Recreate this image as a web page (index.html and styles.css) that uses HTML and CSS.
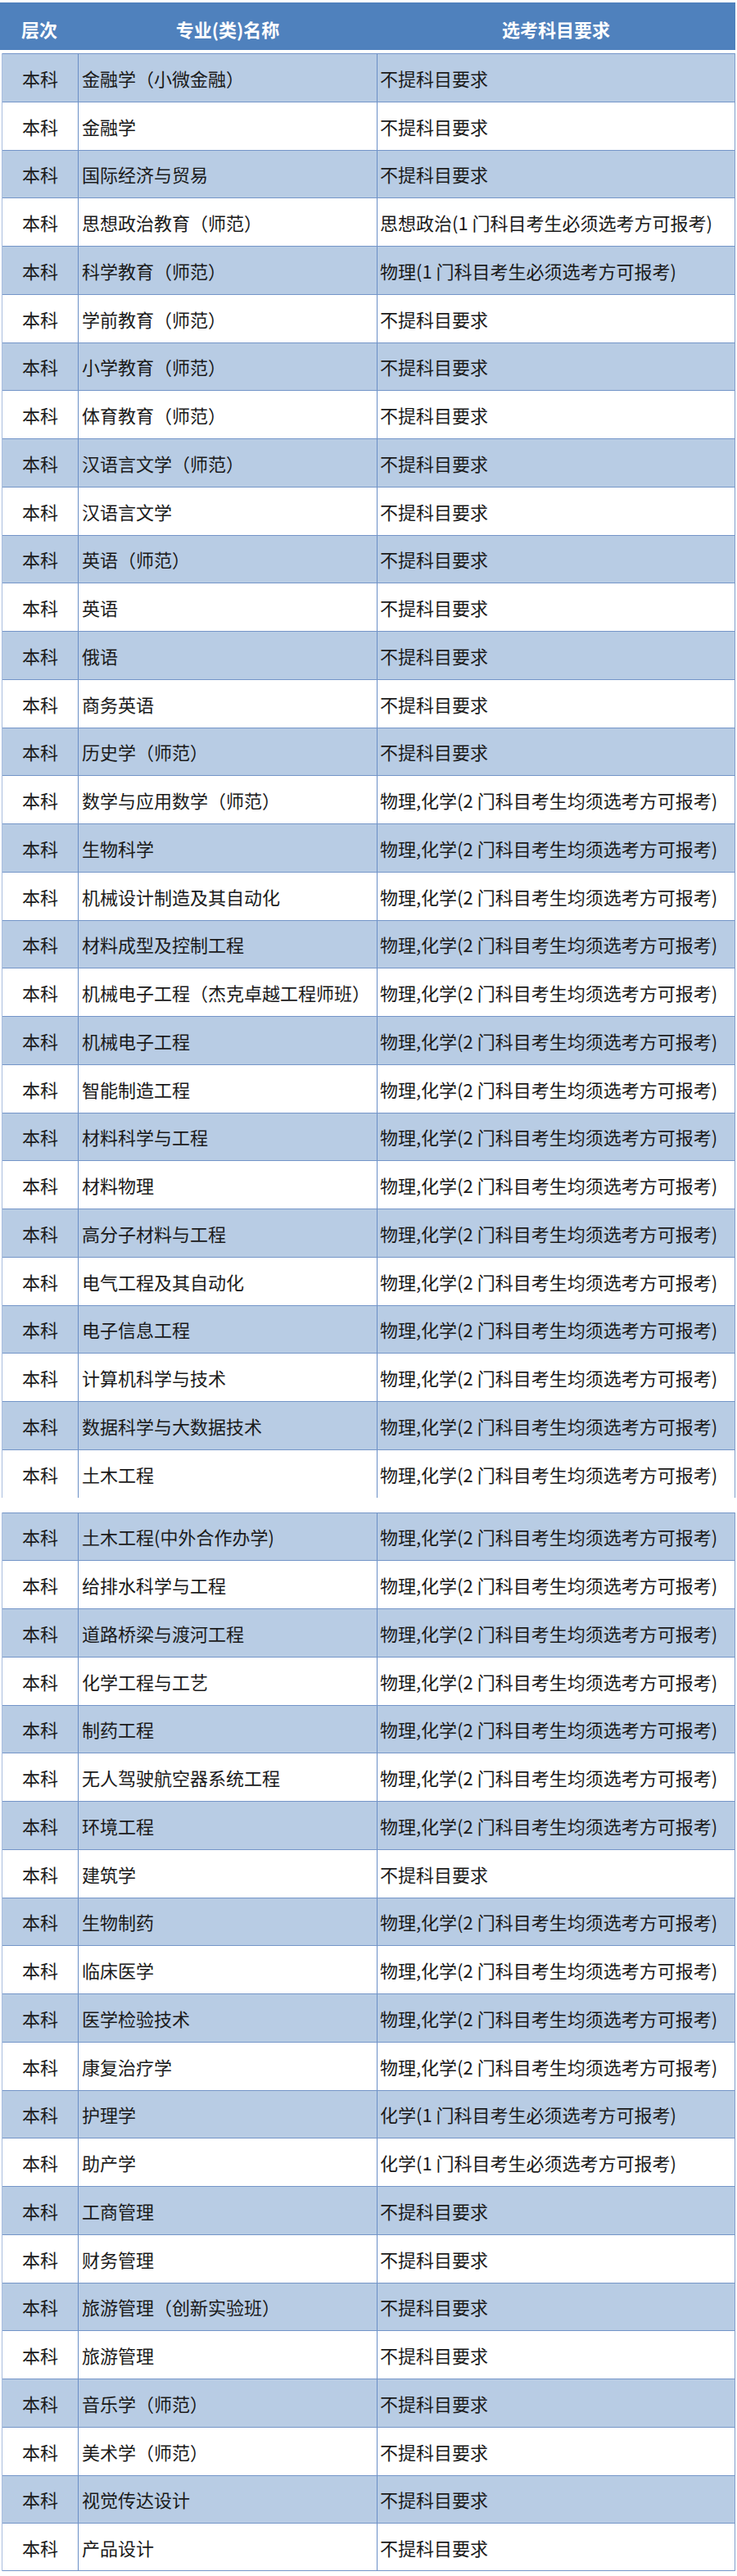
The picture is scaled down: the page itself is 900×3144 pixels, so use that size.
FILE: index.html
```html
<!DOCTYPE html>
<html lang="zh-CN">
<head>
<meta charset="utf-8">
<title>专业选考科目要求</title>
<link rel="stylesheet" href="styles.css">
</head>
<body>
<div class="page">
  <div class="head">
    <div class="hcell">层次</div>
    <div class="hcell">专业(类)名称</div>
    <div class="hcell">选考科目要求</div>
  </div>

  <div class="section">
    <div class="row"><div class="c1">本科</div><div class="c2">金融学（小微金融）</div><div class="c3">不提科目要求</div></div>
    <div class="row"><div class="c1">本科</div><div class="c2">金融学</div><div class="c3">不提科目要求</div></div>
    <div class="row"><div class="c1">本科</div><div class="c2">国际经济与贸易</div><div class="c3">不提科目要求</div></div>
    <div class="row"><div class="c1">本科</div><div class="c2">思想政治教育（师范）</div><div class="c3">思想政治(1 门科目考生必须选考方可报考)</div></div>
    <div class="row"><div class="c1">本科</div><div class="c2">科学教育（师范）</div><div class="c3">物理(1 门科目考生必须选考方可报考)</div></div>
    <div class="row"><div class="c1">本科</div><div class="c2">学前教育（师范）</div><div class="c3">不提科目要求</div></div>
    <div class="row"><div class="c1">本科</div><div class="c2">小学教育（师范）</div><div class="c3">不提科目要求</div></div>
    <div class="row"><div class="c1">本科</div><div class="c2">体育教育（师范）</div><div class="c3">不提科目要求</div></div>
    <div class="row"><div class="c1">本科</div><div class="c2">汉语言文学（师范）</div><div class="c3">不提科目要求</div></div>
    <div class="row"><div class="c1">本科</div><div class="c2">汉语言文学</div><div class="c3">不提科目要求</div></div>
    <div class="row"><div class="c1">本科</div><div class="c2">英语（师范）</div><div class="c3">不提科目要求</div></div>
    <div class="row"><div class="c1">本科</div><div class="c2">英语</div><div class="c3">不提科目要求</div></div>
    <div class="row"><div class="c1">本科</div><div class="c2">俄语</div><div class="c3">不提科目要求</div></div>
    <div class="row"><div class="c1">本科</div><div class="c2">商务英语</div><div class="c3">不提科目要求</div></div>
    <div class="row"><div class="c1">本科</div><div class="c2">历史学（师范）</div><div class="c3">不提科目要求</div></div>
    <div class="row"><div class="c1">本科</div><div class="c2">数学与应用数学（师范）</div><div class="c3">物理,化学(2 门科目考生均须选考方可报考)</div></div>
    <div class="row"><div class="c1">本科</div><div class="c2">生物科学</div><div class="c3">物理,化学(2 门科目考生均须选考方可报考)</div></div>
    <div class="row"><div class="c1">本科</div><div class="c2">机械设计制造及其自动化</div><div class="c3">物理,化学(2 门科目考生均须选考方可报考)</div></div>
    <div class="row"><div class="c1">本科</div><div class="c2">材料成型及控制工程</div><div class="c3">物理,化学(2 门科目考生均须选考方可报考)</div></div>
    <div class="row"><div class="c1">本科</div><div class="c2">机械电子工程（杰克卓越工程师班）</div><div class="c3">物理,化学(2 门科目考生均须选考方可报考)</div></div>
    <div class="row"><div class="c1">本科</div><div class="c2">机械电子工程</div><div class="c3">物理,化学(2 门科目考生均须选考方可报考)</div></div>
    <div class="row"><div class="c1">本科</div><div class="c2">智能制造工程</div><div class="c3">物理,化学(2 门科目考生均须选考方可报考)</div></div>
    <div class="row"><div class="c1">本科</div><div class="c2">材料科学与工程</div><div class="c3">物理,化学(2 门科目考生均须选考方可报考)</div></div>
    <div class="row"><div class="c1">本科</div><div class="c2">材料物理</div><div class="c3">物理,化学(2 门科目考生均须选考方可报考)</div></div>
    <div class="row"><div class="c1">本科</div><div class="c2">高分子材料与工程</div><div class="c3">物理,化学(2 门科目考生均须选考方可报考)</div></div>
    <div class="row"><div class="c1">本科</div><div class="c2">电气工程及其自动化</div><div class="c3">物理,化学(2 门科目考生均须选考方可报考)</div></div>
    <div class="row"><div class="c1">本科</div><div class="c2">电子信息工程</div><div class="c3">物理,化学(2 门科目考生均须选考方可报考)</div></div>
    <div class="row"><div class="c1">本科</div><div class="c2">计算机科学与技术</div><div class="c3">物理,化学(2 门科目考生均须选考方可报考)</div></div>
    <div class="row"><div class="c1">本科</div><div class="c2">数据科学与大数据技术</div><div class="c3">物理,化学(2 门科目考生均须选考方可报考)</div></div>
    <div class="row"><div class="c1">本科</div><div class="c2">土木工程</div><div class="c3">物理,化学(2 门科目考生均须选考方可报考)</div></div>
  </div>

  <div class="section section-2">
    <div class="row"><div class="c1">本科</div><div class="c2">土木工程(中外合作办学)</div><div class="c3">物理,化学(2 门科目考生均须选考方可报考)</div></div>
    <div class="row"><div class="c1">本科</div><div class="c2">给排水科学与工程</div><div class="c3">物理,化学(2 门科目考生均须选考方可报考)</div></div>
    <div class="row"><div class="c1">本科</div><div class="c2">道路桥梁与渡河工程</div><div class="c3">物理,化学(2 门科目考生均须选考方可报考)</div></div>
    <div class="row"><div class="c1">本科</div><div class="c2">化学工程与工艺</div><div class="c3">物理,化学(2 门科目考生均须选考方可报考)</div></div>
    <div class="row"><div class="c1">本科</div><div class="c2">制药工程</div><div class="c3">物理,化学(2 门科目考生均须选考方可报考)</div></div>
    <div class="row"><div class="c1">本科</div><div class="c2">无人驾驶航空器系统工程</div><div class="c3">物理,化学(2 门科目考生均须选考方可报考)</div></div>
    <div class="row"><div class="c1">本科</div><div class="c2">环境工程</div><div class="c3">物理,化学(2 门科目考生均须选考方可报考)</div></div>
    <div class="row"><div class="c1">本科</div><div class="c2">建筑学</div><div class="c3">不提科目要求</div></div>
    <div class="row"><div class="c1">本科</div><div class="c2">生物制药</div><div class="c3">物理,化学(2 门科目考生均须选考方可报考)</div></div>
    <div class="row"><div class="c1">本科</div><div class="c2">临床医学</div><div class="c3">物理,化学(2 门科目考生均须选考方可报考)</div></div>
    <div class="row"><div class="c1">本科</div><div class="c2">医学检验技术</div><div class="c3">物理,化学(2 门科目考生均须选考方可报考)</div></div>
    <div class="row"><div class="c1">本科</div><div class="c2">康复治疗学</div><div class="c3">物理,化学(2 门科目考生均须选考方可报考)</div></div>
    <div class="row"><div class="c1">本科</div><div class="c2">护理学</div><div class="c3">化学(1 门科目考生必须选考方可报考)</div></div>
    <div class="row"><div class="c1">本科</div><div class="c2">助产学</div><div class="c3">化学(1 门科目考生必须选考方可报考)</div></div>
    <div class="row"><div class="c1">本科</div><div class="c2">工商管理</div><div class="c3">不提科目要求</div></div>
    <div class="row"><div class="c1">本科</div><div class="c2">财务管理</div><div class="c3">不提科目要求</div></div>
    <div class="row"><div class="c1">本科</div><div class="c2">旅游管理（创新实验班）</div><div class="c3">不提科目要求</div></div>
    <div class="row"><div class="c1">本科</div><div class="c2">旅游管理</div><div class="c3">不提科目要求</div></div>
    <div class="row"><div class="c1">本科</div><div class="c2">音乐学（师范）</div><div class="c3">不提科目要求</div></div>
    <div class="row"><div class="c1">本科</div><div class="c2">美术学（师范）</div><div class="c3">不提科目要求</div></div>
    <div class="row"><div class="c1">本科</div><div class="c2">视觉传达设计</div><div class="c3">不提科目要求</div></div>
    <div class="row"><div class="c1">本科</div><div class="c2">产品设计</div><div class="c3">不提科目要求</div></div>
  </div>
</div>
</body>
</html>
```

FILE: styles.css
```css
html, body {
  margin: 0;
  padding: 0;
  background: #ffffff;
}

.page {
  width: 900px;
  padding-top: 3px;
  font-family: "Noto Sans CJK SC", "Noto Sans", sans-serif;
  font-size: 22px;
  color: #1a1a1a;
}

.head {
  width: 898px;
  height: 58px;
  display: grid;
  grid-template-columns: 96px 364px 1fr;
  background: #4f81bd;
  color: #ffffff;
  font-weight: bold;
  margin-bottom: 4px;
}

.hcell {
  display: flex;
  align-items: center;
  justify-content: center;
  padding-top: 5px;
  box-sizing: border-box;
}

.section {
  margin-left: 2px;
  width: 896px;
  box-sizing: border-box;
  border-left: 1px solid #a9bedf;
  border-right: 1px solid #7f9dcb;
}

.section-2 {
  margin-top: 18px;
}

.row {
  display: grid;
  grid-template-columns: 93px 365px 1fr;
  height: 58.75px;
  box-sizing: border-box;
  border-top: 1px solid #7495c8;
  background: #ffffff;
}

.row:nth-child(odd) {
  background: #b8cce4;
}

.section-2 .row:last-child {
  border-bottom: 1px solid #7495c8;
}

.c1, .c2, .c3 {
  display: flex;
  align-items: center;
  white-space: nowrap;
  box-sizing: border-box;
}

.c1 {
  justify-content: center;
  border-right: 1px solid #6a8fc6;
}

.c2 {
  padding-left: 4px;
  border-right: 1px solid #6a8fc6;
}

.c3 {
  padding-left: 3px;
}
```
